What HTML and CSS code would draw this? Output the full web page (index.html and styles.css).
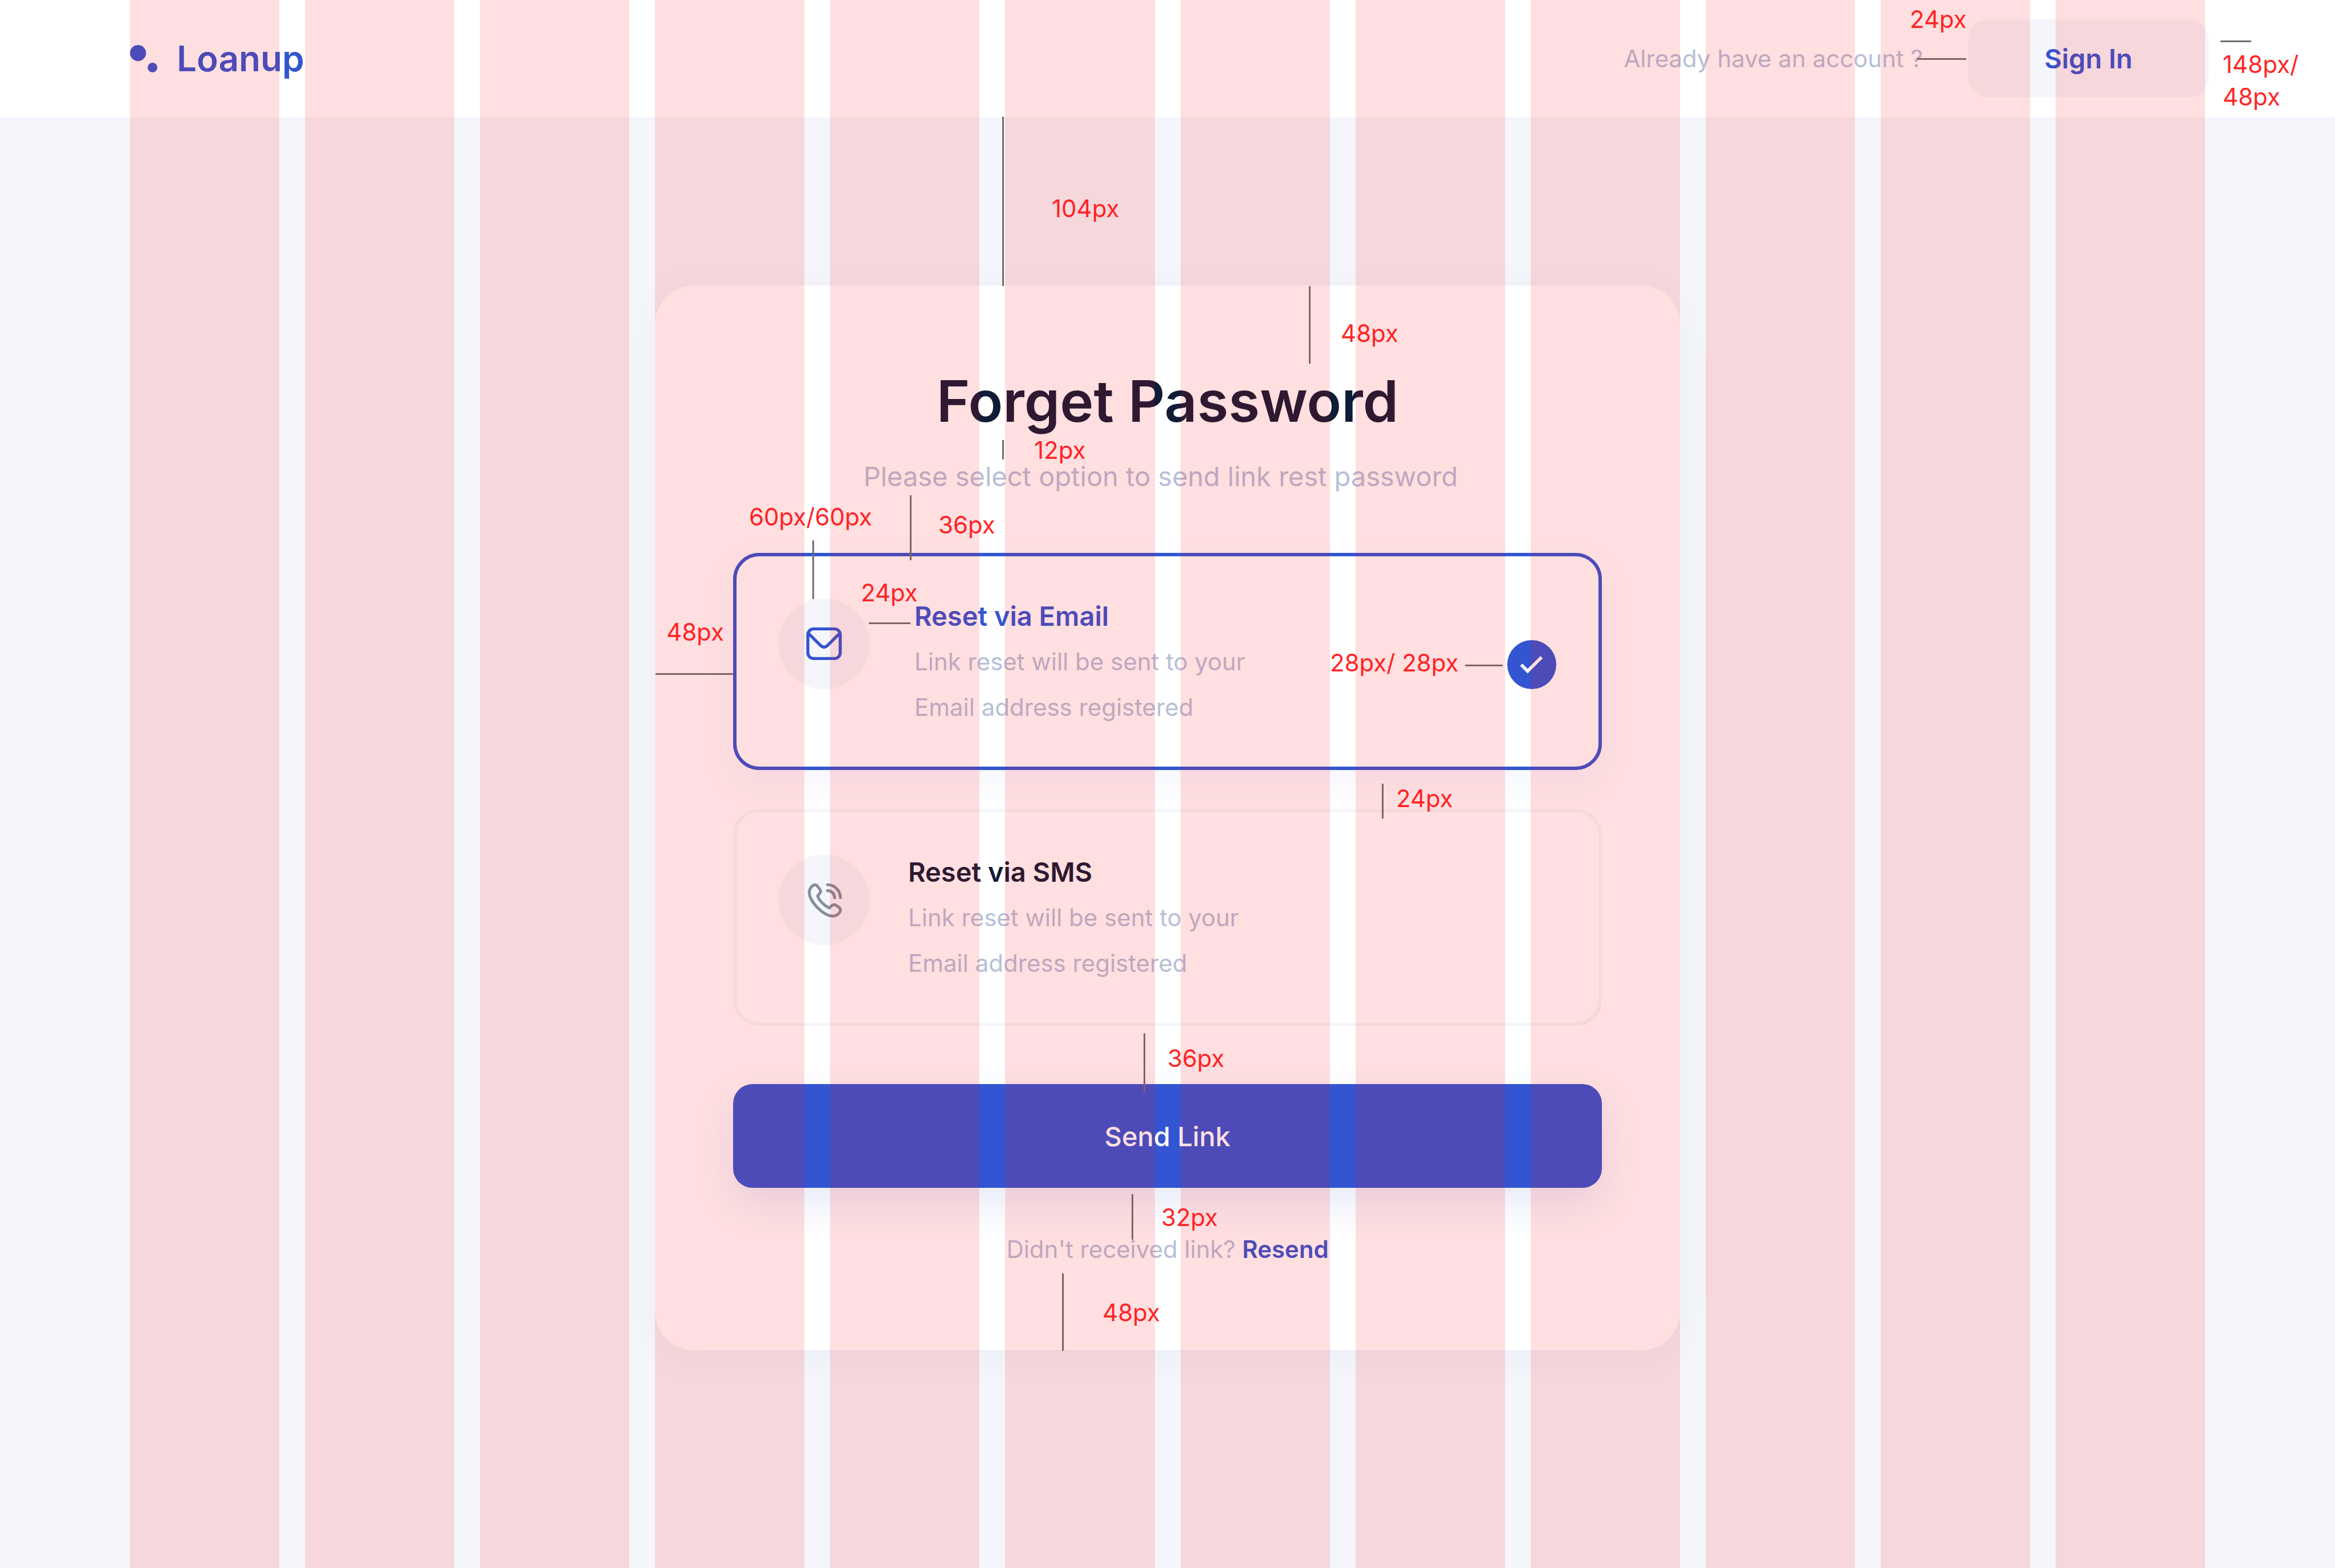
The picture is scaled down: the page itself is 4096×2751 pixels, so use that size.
FILE: index.html
```html
<!DOCTYPE html>
<html lang="en">
<head>
  <meta charset="utf-8">
  <meta name="viewport" content="width=device-width, initial-scale=1">
  <title>Loanup – Forget Password</title>
  <link rel="stylesheet" href="styles.css">
</head>
<body>
  <header class="header">
    <a class="logo" href="#">
      <svg class="logo__mark" viewBox="0 0 51 51" aria-hidden="true">
        <circle cx="15" cy="15" r="15"/>
        <circle cx="42" cy="42" r="9"/>
      </svg>
      <span>Loanup</span>
    </a>
    <div class="header__account">
      <span class="header__hint">Already have an account ?</span>
      <div class="signin">
        <button class="signin__button" type="button">Sign In</button>
        <span class="note note--signin-gap">24px</span>
        <i class="rule rule--h rule--signin-gap"></i>
        <i class="rule rule--h rule--signin-size"></i>
        <span class="note note--signin-size">148px/<br>48px</span>
      </div>
    </div>
  </header>

  <main class="main">
    <section class="card">
      <h1 class="card__title">Forget Password</h1>
      <p class="card__subtitle">Please select option to send link rest password</p>

      <form class="form">
        <div class="options" role="radiogroup" aria-label="Reset method">
          <label class="option option--selected">
            <span class="option__icon">
              <svg class="icon icon--mail" viewBox="30 22 504 504" aria-hidden="true">
                <rect x="192" y="191" width="180" height="165" rx="32"/>
                <path d="M198 219 L260 281 Q282 304 304 281 L366 219"/>
              </svg>
            </span>
            <span class="option__text">
              <strong class="option__title">Reset via Email</strong>
              <span class="option__desc">Link reset will be sent to your<br>Email address registered</span>
            </span>
            <span class="option__mark">
              <input class="option__radio" type="radio" name="method" value="email" checked>
              <svg class="option__check" viewBox="0 0 90 90" aria-hidden="true">
                <path d="M25.7 45.3 L37.3 57 L63 31.3"/>
              </svg>
            </span>
          </label>

          <label class="option">
            <span class="option__icon">
              <svg class="icon icon--phone" viewBox="30 33 504 504" aria-hidden="true">
                <path d="M220 206 Q234 197 244 208 L259 228 Q267 238 259 249 L246 264 Q262 306 311 331 L326 317 Q337 309 348 316 L367 329 Q378 340 370 354 Q356 376 328 376 Q290 374 243 327 Q200 280 200 244 Q201 221 220 206 Z"/>
                <path d="M301 202 A72 72 0 0 1 373 274"/>
                <path d="M301 234 A40 40 0 0 1 341 274"/>
              </svg>
            </span>
            <span class="option__text">
              <strong class="option__title">Reset via SMS</strong>
              <span class="option__desc">Link reset will be sent to your<br>Email address registered</span>
            </span>
            <span class="option__mark">
              <input class="option__radio" type="radio" name="method" value="sms">
            </span>
          </label>
        </div>

        <button class="send" type="button">Send Link</button>
      </form>

      <p class="card__footer">Didn't received link? <a class="card__resend" href="#">Resend</a></p>

      <div class="notes">
        <i class="rule rule--v rule--card-top"></i>
        <span class="note note--card-top">104px</span>
        <i class="rule rule--v rule--pad-top"></i>
        <span class="note note--pad-top">48px</span>
        <i class="rule rule--v rule--title"></i>
        <span class="note note--title">12px</span>
        <i class="rule rule--v rule--subtitle"></i>
        <span class="note note--subtitle">36px</span>
        <i class="rule rule--v rule--icon"></i>
        <span class="note note--icon">60px/60px</span>
        <i class="rule rule--h rule--icon-gap"></i>
        <span class="note note--icon-gap">24px</span>
        <i class="rule rule--h rule--pad-left"></i>
        <span class="note note--pad-left">48px</span>
        <i class="rule rule--h rule--mark"></i>
        <span class="note note--mark">28px/ 28px</span>
        <i class="rule rule--v rule--options"></i>
        <span class="note note--options">24px</span>
        <i class="rule rule--v rule--send"></i>
        <span class="note note--send">36px</span>
        <i class="rule rule--v rule--footer"></i>
        <span class="note note--footer">32px</span>
        <i class="rule rule--v rule--pad-bottom"></i>
        <span class="note note--pad-bottom">48px</span>
      </div>
    </section>
  </main>

  <div class="columns" aria-hidden="true">
    <i></i><i></i><i></i><i></i><i></i><i></i><i></i><i></i><i></i><i></i><i></i><i></i>
  </div>
</body>
</html>
```
FILE: styles.css
```css
:root {
  --blue: #3355d1;
  --ink: #101c36;
  --muted: #b6bfd8;
  --surface: #f4f6fb;
  --note: #ff2626;
  --rule: #707070;
}

* {
  box-sizing: border-box;
}

body {
  position: relative;
  min-height: 100vh;
  margin: 0;
  background: var(--surface);
  color: var(--ink);
  font-family: Inter, "Liberation Sans", sans-serif;
  font-size: 42px;
}

h1,
p {
  margin: 0;
}

button {
  border: 0;
  font-family: inherit;
  cursor: pointer;
}

a {
  color: var(--blue);
  text-decoration: none;
}

/* Header */

.header {
  display: flex;
  align-items: center;
  justify-content: space-between;
  padding: 34px 222px 34px 228px;
  background: #fff;
}

.logo {
  display: flex;
  align-items: center;
  gap: 34px;
  font-size: 62px;
  font-weight: 600;
}

.logo__mark {
  width: 48px;
  height: 48px;
  fill: var(--blue);
}

.header__account {
  display: flex;
  align-items: center;
  gap: 80px;
}

.header__hint {
  color: var(--muted);
}

.signin {
  position: relative;
}

.signin__button {
  display: block;
  width: 421px;
  height: 137px;
  border-radius: 34px;
  background: var(--surface);
  color: var(--blue);
  font-size: 47px;
  font-weight: 600;
}

/* Card */

.main {
  padding: 296px 48px;
}

.card {
  position: relative;
  max-width: 1798px;
  margin: 0 auto;
  padding: 137px;
  border-radius: 68px;
  background: #fff;
  box-shadow: 0 12px 72px rgba(30, 45, 120, 0.04);
}

.card__title {
  font-size: 100px;
  font-weight: 600;
  line-height: 132px;
  text-align: center;
}

.card__subtitle {
  margin-top: 34px;
  padding-right: 24px;
  color: var(--muted);
  font-size: 47px;
  line-height: 64px;
  text-align: center;
}

.form {
  margin-top: 102px;
}

.options {
  display: grid;
  gap: 68px;
}

.option {
  display: flex;
  align-items: flex-start;
  gap: 68px;
  padding: 64px 74px;
  border: 6px solid var(--surface);
  border-radius: 46px;
  background: #fff;
  cursor: pointer;
}

.option--selected {
  gap: 79px;
  border-color: var(--blue);
  box-shadow: 0 23px 68px rgba(51, 85, 209, 0.05);
}

.option__icon {
  width: 159px;
  height: 159px;
  margin-top: 10px;
  border-radius: 50%;
  background: var(--surface);
}

.icon {
  display: block;
  width: 100%;
  fill: none;
  stroke-linejoin: round;
  stroke-width: 17;
}

.icon--mail {
  stroke: var(--blue);
}

.icon--phone {
  stroke: #858e9b;
  stroke-linecap: round;
  stroke-width: 16;
}

.option__text {
  flex: 1;
}

.option__title {
  display: block;
  font-size: 47px;
  font-weight: 600;
  line-height: 81px;
}

.option--selected .option__title {
  color: var(--blue);
}

.option__desc {
  display: block;
  color: var(--muted);
  line-height: 80px;
}

.option__mark {
  display: grid;
  width: 86px;
  height: 86px;
  margin-top: 83px;
}

.option__radio,
.option__check {
  grid-area: 1 / 1;
  width: 100%;
  height: 100%;
  margin: 0;
}

.option__radio {
  appearance: none;
  border-radius: 50%;
}

.option__radio:checked {
  background: var(--blue);
}

.option__check {
  fill: none;
  stroke: #fff;
  stroke-width: 6;
  pointer-events: none;
}

.send {
  display: block;
  width: 100%;
  height: 182px;
  margin-top: 102px;
  border-radius: 34px;
  background: var(--blue);
  box-shadow: 0 28px 68px rgba(51, 85, 209, 0.12);
  color: #fff;
  font-size: 47px;
  font-weight: 500;
}

.card__footer {
  margin-top: 68px;
  color: var(--muted);
  line-height: 80px;
  text-align: center;
}

.card__resend {
  font-weight: 600;
}

/* Spacing notes, pinned over the parts they measure */

.note,
.rule {
  position: absolute;
}

.note {
  color: var(--note);
  line-height: 57px;
  white-space: nowrap;
}

.rule {
  background: var(--rule);
}

.rule--h {
  height: 3px;
}

.rule--v {
  width: 3px;
}

.note--signin-gap { left: -103px; top: -29px; }
.rule--signin-gap { left: -90px; top: 68px; width: 86px; }
.rule--signin-size { left: 442px; top: 37px; width: 54px; }
.note--signin-size { left: 446px; top: 50px; }

.rule--card-top { left: 609px; top: -296px; height: 297px; }
.note--card-top { left: 696px; top: -164px; }
.rule--pad-top { left: 1147px; top: 1px; height: 136px; }
.note--pad-top { left: 1203px; top: 55px; }
.rule--title { left: 609px; top: 271px; height: 34px; }
.note--title { left: 665px; top: 260px; }
.rule--subtitle { left: 447px; top: 368px; height: 114px; }
.note--subtitle { left: 497px; top: 391px; }
.rule--icon { left: 276px; top: 447px; height: 103px; }
.note--icon { left: 165px; top: 377px; }
.rule--icon-gap { left: 375px; top: 591px; width: 73px; }
.note--icon-gap { left: 361px; top: 510px; }
.rule--pad-left { left: 1px; top: 680px; width: 137px; }
.note--pad-left { left: 20px; top: 579px; }
.rule--mark { left: 1421px; top: 665px; width: 66px; }
.note--mark { left: 1184px; top: 633px; }
.rule--options { left: 1275px; top: 874px; height: 61px; }
.note--options { left: 1300px; top: 871px; }
.rule--send { left: 857px; top: 1312px; height: 103px; }
.note--send { left: 899px; top: 1327px; }
.rule--footer { left: 836px; top: 1594px; height: 80px; }
.note--footer { left: 888px; top: 1606px; }
.rule--pad-bottom { left: 714px; top: 1733px; height: 136px; }
.note--pad-bottom { left: 785px; top: 1773px; }

/* Twelve-column layout grid, laid over the whole page */

.columns {
  position: absolute;
  inset: 0;
  display: grid;
  grid-template-columns: repeat(12, 1fr);
  gap: 45px;
  padding: 0 228px;
  pointer-events: none;
}

.columns i {
  background: rgba(255, 4, 16, 0.13);
}
```
